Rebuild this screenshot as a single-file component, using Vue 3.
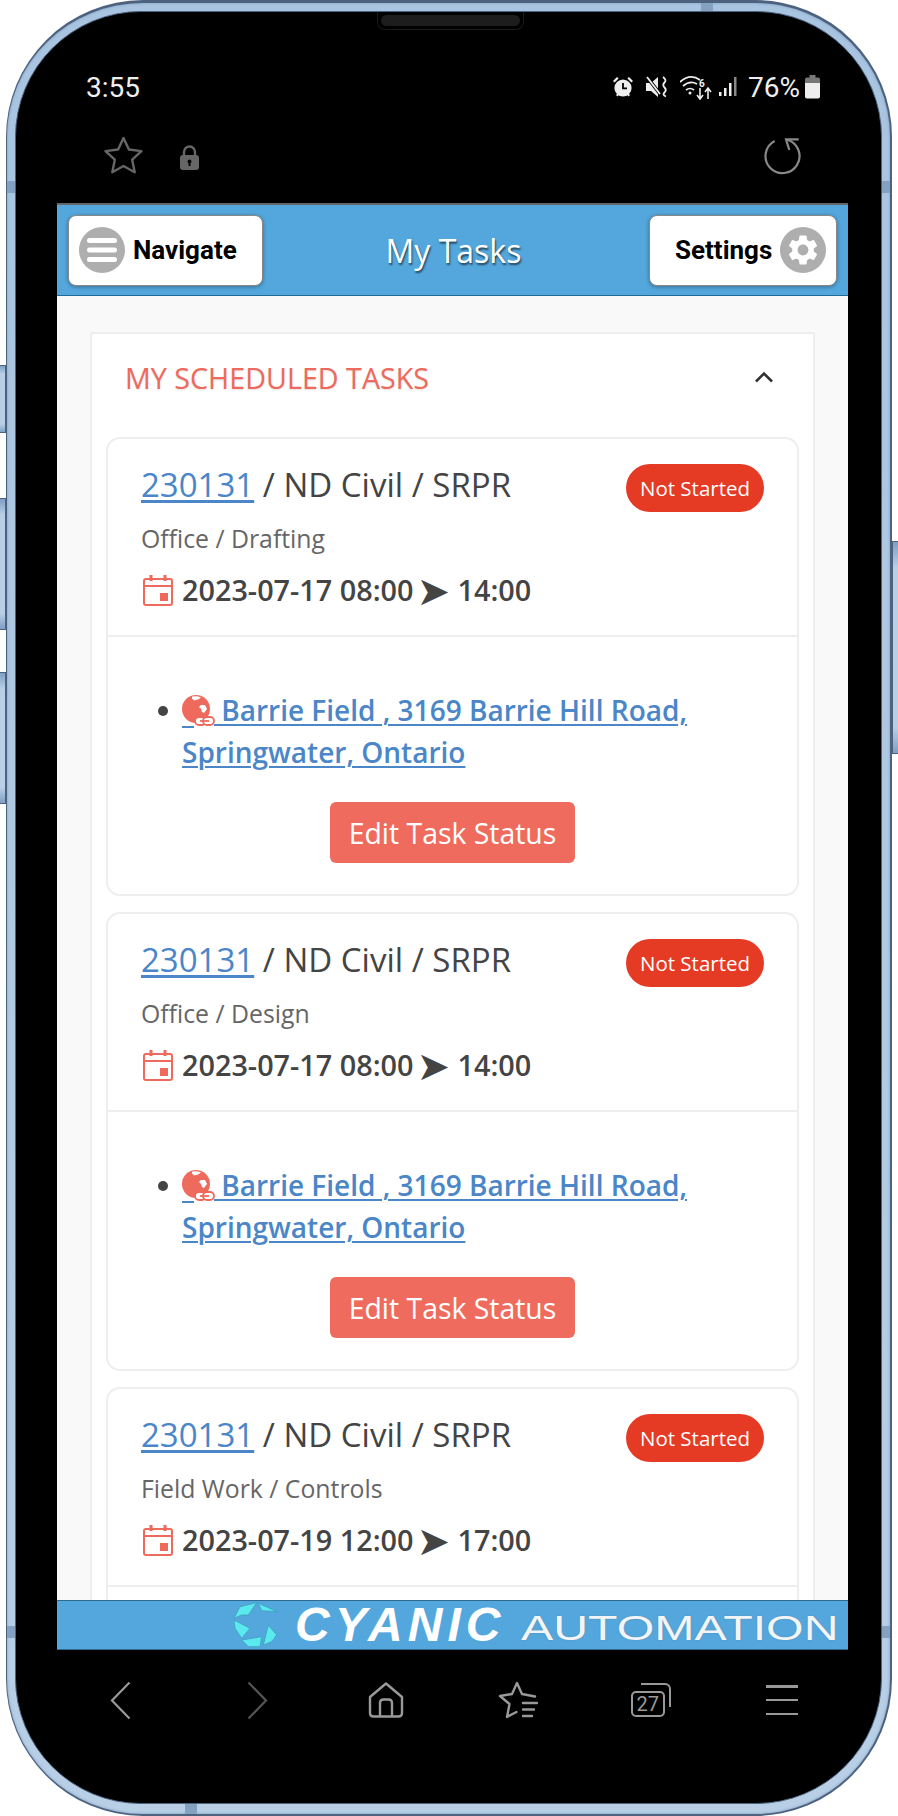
<script setup>
const tasks = [
  { sub: 'Office / Drafting', date: '2023-07-17 08:00', end: '14:00', open: true },
  { sub: 'Office / Design', date: '2023-07-17 08:00', end: '14:00', open: true },
  { sub: 'Field Work / Controls', date: '2023-07-19 12:00', end: '17:00', open: false }
]
const notches = ['n-top', 'n-bottom', 'n-l1', 'n-l2', 'n-r1', 'n-r2']
const blades = [
  '25.3,1.3 44.3,9.7 28.7,8.7',
  '1,16.3 7,4.7 23.7,.7 15.3,13 8.7,13',
  '1,18 17,26.3 8.7,36.3 2,26.3',
  '8.7,38 28.7,34.7 27,44.7 15.3,44.7',
  '30.3,43 35.3,23 43.7,33 38.7,39.7'
]
</script>

<template>
  <div class="page">
    <i class="side s1"></i><i class="side s2"></i><i class="side s3"></i><i class="side s4"></i>
    <div class="phone">
      <i v-for="n in notches" :key="n" class="notch" :class="n"></i>
      <div class="bezel">
        <div class="camera"><i class="camera-pill"></i></div>

        <div class="status">
          <span class="clock">3:55</span>
          <div class="status-right">
            <svg width="22" height="22" viewBox="0 0 22 22" fill="#eee">
              <circle cx="11" cy="12" r="8.6"/>
              <path d="M1 5l4-4 1.6 1.6-4 4zM21 5l-4-4-1.6 1.6 4 4zM4 19l2-2 1.4 1.4-2 2zM18 19l-2-2-1.4 1.4 2 2z"/>
              <path d="M11 7v5.4h4" fill="none" stroke="#000" stroke-width="1.8"/>
            </svg>
            <svg class="ic-mute" width="22" height="22" viewBox="0 0 22 22">
              <path d="M0 7h5l7-6v20l-7-6H0z" fill="#eee"/>
              <path d="M1 1l13 17" stroke="#000" stroke-width="3.5"/>
              <path d="M1 1l13 17" stroke="#eee" stroke-width="1.8"/>
              <path d="M17 1q4 3 1.5 5.5t0 5q2.5 2.5 0 5t1.5 4" fill="none" stroke="#eee" stroke-width="1.8"/>
            </svg>
            <svg class="ic-wifi" width="32" height="25" viewBox="0 0 32 25" fill="none" stroke="#eee" stroke-width="1.7">
              <path d="M0 7q10-9 20-2M3 11q7-6 14-2M6 15q4-3 8 0"/>
              <circle cx="10" cy="18" r="1.5" fill="#eee" stroke="none"/>
              <text x="19" y="12" fill="#eee" stroke="none" class="wifi-six">6</text>
              <path d="M20 13v11M17 20l3 4 3-4M28 24V13M25 17l3-4 3 4" stroke-width="1.6"/>
            </svg>
            <svg class="ic-signal" width="20" height="20" viewBox="0 0 20 20" fill="#eee">
              <rect x="0" y="15" width="2.5" height="4"/>
              <rect x="5" y="11" width="2.5" height="8"/>
              <rect x="10" y="6" width="2.5" height="13"/>
              <rect x="15" y="0" width="2.5" height="19" fill="#888"/>
            </svg>
            <span class="percent">76%</span>
            <svg width="15" height="24" viewBox="0 0 15 24">
              <path d="M4.5 0h6v2.5H13q2 0 2 2V8H0V4.5q0-2 2-2h2.5z" fill="#777"/>
              <path d="M0 8h15v13.5q0 2-2 2H2q-2 0-2-2z" fill="#eee"/>
            </svg>
          </div>
        </div>

        <div class="urlbar">
          <div class="url-left">
            <svg width="41" height="40" viewBox="0 0 41 40" fill="none" stroke="#666" stroke-width="2.4" stroke-linejoin="round">
              <path d="M20.5 2l5.4 11.5 12.6 1.6-9.3 8.6 2.5 12.5-11.2-6.2-11.2 6.2 2.5-12.5-9.3-8.6 12.6-1.6z"/>
            </svg>
            <svg class="ic-lock" width="19" height="25" viewBox="0 0 19 25">
              <path d="M4 11V7a5.5 5.5 0 0 1 11 0v4" fill="none" stroke="#666" stroke-width="2.4"/>
              <rect x="0" y="10" width="19" height="15" rx="3" fill="#666"/>
              <path d="M9.5 14.5a2 2 0 0 1 1 3.7V21h-2v-2.8a2 2 0 0 1 1-3.7z" fill="#000"/>
            </svg>
          </div>
          <svg width="38" height="38" viewBox="0 0 38 38" fill="none" stroke="#888" stroke-width="2.2">
            <path d="M11.7 4A17 17 0 1 0 24 2.7"/>
            <path d="M35.7 2.3H23L26.3 13"/>
          </svg>
        </div>

        <div class="screen">
          <header class="topbar">
            <button class="tb-btn nav-btn">
              <span class="circle">
                <svg width="30" height="24" viewBox="0 0 30 24" fill="#fff">
                  <rect x="0" y="0" width="30" height="5" rx="2.5"/>
                  <rect x="0" y="9.5" width="30" height="5" rx="2.5"/>
                  <rect x="0" y="19" width="30" height="5" rx="2.5"/>
                </svg>
              </span>
              <span>Navigate</span>
            </button>
            <h1 class="title">My Tasks</h1>
            <button class="tb-btn set-btn">
              <span>Settings</span>
              <span class="circle">
                <svg width="36" height="36" viewBox="0 0 24 24" fill="#fff">
                  <path fill-rule="evenodd" d="M19.14 12.94c.04-.3.06-.61.06-.94 0-.32-.02-.64-.07-.94l2.03-1.58c.18-.14.23-.41.12-.61l-1.92-3.32c-.12-.22-.37-.29-.59-.22l-2.39.96c-.5-.38-1.03-.7-1.62-.94l-.36-2.54c-.04-.24-.24-.41-.48-.41h-3.84c-.24 0-.43.17-.47.41l-.36 2.54c-.59.24-1.13.57-1.62.94l-2.39-.96c-.22-.08-.47 0-.59.22L2.74 8.87c-.12.21-.08.47.12.61l2.03 1.58c-.05.3-.09.63-.09.94s.02.64.07.94l-2.03 1.58c-.18.14-.23.41-.12.61l1.92 3.32c.12.22.37.29.59.22l2.39-.96c.5.38 1.03.7 1.62.94l.36 2.54c.05.24.24.41.48.41h3.84c.24 0 .44-.17.47-.41l.36-2.54c.59-.24 1.13-.56 1.62-.94l2.39.96c.22.08.47 0 .59-.22l1.92-3.32c.12-.22.07-.47-.12-.61l-2.01-1.58zM12 15.6c-1.98 0-3.6-1.62-3.6-3.6s1.62-3.6 3.6-3.6 3.6 1.62 3.6 3.6-1.62 3.6-3.6 3.6z"/>
                </svg>
              </span>
            </button>
          </header>

          <main class="main">
            <section class="panel">
              <div class="panel-head">
                <h2>MY SCHEDULED TASKS</h2>
                <svg width="20" height="12" viewBox="0 0 20 12" fill="none" stroke="#333" stroke-width="2.6">
                  <path d="M2 10.5l8-8 8 8"/>
                </svg>
              </div>

              <article v-for="(t, i) in tasks" :key="i" class="task">
                <div class="task-head">
                  <div class="task-top">
                    <div class="task-title"><a class="num">230131</a> / ND Civil / SRPR</div>
                    <span class="badge">Not Started</span>
                  </div>
                  <div class="task-sub">{{ t.sub }}</div>
                  <div class="task-date">
                    <svg width="30" height="31" viewBox="0 0 30 31" fill="none" stroke="#ee6a5c" stroke-width="2">
                      <rect x="1" y="4" width="28" height="26" rx="2"/>
                      <path d="M1 11h28"/>
                      <path d="M8 0v6M22 0v6" stroke-width="3"/>
                      <rect x="17" y="18" width="8" height="8" fill="#ee6a5c" stroke="none"/>
                    </svg>
                    <span>{{ t.date }}<span class="arrow">➤</span> {{ t.end }}</span>
                  </div>
                </div>
                <div class="task-body">
                  <template v-if="t.open">
                    <ul>
                      <li>
                        <a class="loc">
                          <span class="globe">
                            <svg width="36" height="34" viewBox="0 0 36 34">
                              <circle cx="14" cy="14" r="14" fill="#ee6a5c"/>
                              <path d="M10 1.5q5-1 9 1l-3 2-4 1-2-2zM19 10l4 0 2 4-3 4-2-1-1-3-2-2z" fill="#fff"/>
                              <rect x="13" y="22" width="11" height="8" rx="4" fill="#fff" stroke="#ee6a5c" stroke-width="1.8"/>
                              <rect x="21" y="22" width="11" height="8" rx="4" fill="#fff" stroke="#ee6a5c" stroke-width="1.8"/>
                              <path d="M18 26h9" stroke="#ee6a5c" stroke-width="1.8"/>
                            </svg>
                          </span> Barrie Field , 3169 Barrie Hill Road, Springwater, Ontario
                        </a>
                      </li>
                    </ul>
                    <button class="edit">Edit Task Status</button>
                  </template>
                </div>
              </article>
            </section>
          </main>

          <footer class="footer">
            <svg class="aperture" width="45" height="46" viewBox="0 0 45 46">
              <polygon v-for="b in blades" :key="b" :points="b" fill="#5ae9ee" stroke="#3f9fb8" stroke-width=".8" stroke-linejoin="round"/>
            </svg>
            <span class="cyanic">CYANIC</span>
            <span class="automation">AUTOMATION</span>
          </footer>
        </div>

        <nav class="navbar">
          <svg class="nb-back" width="21" height="39" viewBox="0 0 21 39" fill="none" stroke="#999" stroke-width="2.2"><path d="M19.5 1.5L2 19.5l17.5 18"/></svg>
          <svg class="nb-fwd" width="21" height="39" viewBox="0 0 21 39" fill="none" stroke="#555" stroke-width="2.2"><path d="M1.5 1.5L19 19.5l-17.5 18"/></svg>
          <svg width="36" height="36" viewBox="0 0 36 36" fill="none" stroke="#999" stroke-width="2.4" stroke-linejoin="round">
            <path d="M2 15L18 1.5 34 15v16q0 3.5-3.5 3.5h-25Q2 34.5 2 31z"/>
            <path d="M12 34.5V21q0-3.5 3.5-3.5h5Q24 17.5 24 21v13.5"/>
          </svg>
          <svg width="40" height="38" viewBox="0 0 40 38" fill="none" stroke="#999" stroke-width="2.4" stroke-linejoin="round" stroke-linecap="round">
            <path d="M18.5 31L9 36l2.5-13L2 15l12-2L19 2l5 11 13 2.5M25 22h14M25 28.5h11M25 35h9"/>
          </svg>
          <div class="tabs">
            <i class="tabs-back"></i>
            <span class="tabs-front">27</span>
          </div>
          <div class="menu"><i></i><i></i><i></i></div>
        </nav>
      </div>
    </div>
  </div>
</template>

<style>
html, body { margin: 0; background: #fff; }
</style>

<style scoped>
.page {
  position: relative;
  width: 898px;
  height: 1816px;
  padding: 0 6px;
  box-sizing: border-box;
  overflow: hidden;
  background: #fff;
}
.side {
  position: absolute;
  width: 6px;
  background: linear-gradient(to bottom, #7ea0c4, #b8cfe6 12%, #b8cfe6 88%, #7ea0c4);
  border: 1px solid #4c627f;
  box-sizing: border-box;
}
.s1 { left: 0; top: 365px; height: 68px; border-left: 0; }
.s2 { left: 0; top: 498px; height: 132px; border-left: 0; }
.s3 { left: 0; top: 672px; height: 132px; border-left: 0; }
.s4 { right: 0; top: 541px; height: 213px; border-right: 0; }

.phone {
  position: relative;
  height: 1816px;
  box-sizing: border-box;
  padding: 9px 9px 11px;
  border-radius: 137px;
  background: linear-gradient(to bottom, #a9c4e0, #b8cfe6);
  border: 2px solid #4c627f;
  border-top-width: 3px;
  border-left-width: 1px;
  box-shadow: inset 0 0 3px #7d9dc2;
}
.notch { position: absolute; background: #84a1c2; }
.n-top { left: 694px; top: 0; width: 12px; height: 9px; }
.n-bottom { left: 178px; bottom: 0; width: 12px; height: 11px; }
.n-l1 { left: 0; top: 178px; width: 9px; height: 12px; }
.n-l2 { left: 0; top: 1623px; width: 9px; height: 12px; }
.n-r1 { right: 0; top: 178px; width: 9px; height: 12px; }
.n-r2 { right: 0; top: 1623px; width: 9px; height: 12px; }

.bezel {
  position: relative;
  box-sizing: border-box;
  background: #000;
  border-radius: 126px;
  padding: 0 33px 0 41px;
  display: flex;
  flex-direction: column;
  border: 1px solid #4c627f;
  margin: -1px;
  height: calc(100% + 2px);
}
.camera {
  position: absolute;
  left: 361px;
  top: 0;
  width: 147px;
  height: 18px;
  box-sizing: border-box;
  border: 1px solid #1a1a1a;
  border-top: 0;
  border-radius: 0 0 8px 8px;
  padding: 3px;
}
.camera-pill { display: block; height: 11px; border-radius: 6px; background: #1d1d1d; }

.status {
  margin-top: 55px;
  height: 40px;
  padding: 0 28px 0 29px;
  display: flex;
  align-items: center;
  justify-content: space-between;
  color: #eee;
  font-family: Roboto, sans-serif;
  font-size: 28px;
}
.status-right { display: flex; align-items: center; }
.ic-mute { margin-left: 12px; }
.ic-wifi { margin-left: 12px; margin-top: 1px; }
.ic-signal { margin-left: 7px; }
.percent { margin-left: 9px; margin-right: 5px; }
.wifi-six { font: 700 10px Roboto, sans-serif; }

.urlbar {
  margin-top: 29px;
  height: 40px;
  padding: 0 47px 0 46px;
  display: flex;
  align-items: center;
  justify-content: space-between;
}
.url-left { display: flex; align-items: center; gap: 36px; }
.ic-lock { margin-top: 2px; }

.screen {
  margin-top: 27px;
  height: 1447px;
  display: flex;
  flex-direction: column;
  background: #f9f9f9;
  overflow: hidden;
}
.topbar {
  flex: none;
  height: 93px;
  box-sizing: border-box;
  padding: 0 11px;
  background: #54a7dd;
  border-top: 2px solid #666;
  border-bottom: 1px solid #1f6a96;
  display: flex;
  align-items: center;
  justify-content: space-between;
}
.tb-btn {
  height: 71px;
  box-sizing: border-box;
  background: #fff;
  border: 1px solid #888;
  border-radius: 8px;
  box-shadow: 0 1px 4px rgba(0, 0, 0, 0.35);
  font: 700 26px Roboto, sans-serif;
  color: #000;
  display: flex;
  align-items: center;
  padding: 0;
}
.nav-btn { width: 195px; padding-left: 10px; gap: 8px; }
.set-btn { width: 188px; padding-left: 25px; gap: 8px; }
.circle {
  width: 46px;
  height: 46px;
  flex: none;
  border-radius: 50%;
  background: #aeaeae;
  display: flex;
  align-items: center;
  justify-content: center;
}
.title {
  margin: 0 5px 0 0;
  font: 500 32px "Open Sans", sans-serif;
  color: #fff;
  text-shadow: 1px 2px 2px rgba(0, 0, 0, 0.6);
}

.main { flex: 1; min-height: 0; overflow: hidden; padding: 36px 33px 0; }
.panel { background: #fff; border: 2px solid #eee; padding: 0 14px; }
.panel-head {
  height: 103px;
  box-sizing: border-box;
  padding: 0 25px 17px 19px;
  display: flex;
  align-items: center;
  justify-content: space-between;
}
.panel-head h2 {
  margin: 0;
  font: 400 28.7px "Open Sans", sans-serif;
  color: #ee6a5c;
  text-shadow: 0 1px 2px rgba(0, 0, 0, 0.12);
}

.task {
  border: 2px solid #eee;
  border-radius: 14px;
  margin-bottom: 16px;
  font-family: "Open Sans", sans-serif;
  color: #444;
}
.task-head { height: 198px; box-sizing: border-box; padding: 22px 33px 0; border-bottom: 2px solid #eee; }
.task-top { display: flex; align-items: flex-start; justify-content: space-between; height: 48px; }
.task-title { font-size: 33px; line-height: 48px; }
.num { color: #4a86c8; text-decoration: underline; text-underline-offset: 3px; text-decoration-thickness: 3px; }
.badge {
  margin: 3px 0 0 0;
  width: 138px;
  height: 48px;
  border-radius: 24px;
  background: #e53a23;
  color: #fff;
  font-size: 20.5px;
  line-height: 48px;
  text-align: center;
}
.task-sub { margin-top: 11px; font-size: 24.8px; line-height: 36px; color: #666; }
.task-date {
  margin-top: 14px;
  display: flex;
  align-items: center;
  gap: 9px;
  font-size: 28.8px;
  font-weight: 600;
  line-height: 40px;
  padding-left: 2px;
}
.arrow {
  margin-left: 3px;
  font-family: "DejaVu Sans", sans-serif;
  font-weight: 400;
  font-size: 40px;
  line-height: 0;
  vertical-align: -4px;
}

.task-body { height: 257px; box-sizing: border-box; padding-top: 53px; text-align: center; }
.task-body ul { margin: 0; padding: 0 60px 0 74px; text-align: left; list-style: none; }
.task-body li { position: relative; }
.task-body li::before {
  content: "";
  position: absolute;
  left: -24px;
  top: 16px;
  width: 10px;
  height: 10px;
  border-radius: 50%;
  background: #444;
}
.loc {
  color: #4a86c8;
  font-size: 28px;
  font-weight: 600;
  line-height: 41.5px;
  text-decoration: underline;
  text-decoration-thickness: 2px;
  text-underline-offset: 3px;
}
.globe { position: relative; display: inline-block; width: 32px; height: 28px; vertical-align: -2px; }
.globe svg { position: absolute; left: 0; top: 0; }
.globe::after {
  content: "";
  position: absolute;
  left: 0;
  top: 31px;
  width: 12px;
  height: 2px;
  background: #4a86c8;
}
.edit {
  display: block;
  margin: 29px auto 0;
  width: 245px;
  height: 61px;
  border: 0;
  border-radius: 6px;
  background: #ef6b5e;
  color: #fff;
  font: 400 28.4px "Open Sans", sans-serif;
}

.footer {
  flex: none;
  height: 50px;
  box-sizing: border-box;
  padding-left: 176px;
  background: #54a7dd;
  border-top: 1px solid #2f6a8f;
  border-bottom: 1px solid #2f6a8f;
  display: flex;
  align-items: center;
  color: #fff;
  white-space: nowrap;
}
.aperture { flex: none; }
.cyanic {
  margin-left: 17px;
  font: italic 700 48px/40px "Liberation Sans", sans-serif;
  letter-spacing: 5px;
}
.automation {
  margin-left: 16px;
  margin-top: 6px;
  font: 400 35px/40px "Liberation Sans", sans-serif;
  color: #f2f5f7;
  text-shadow: 0 0 1px rgba(90, 90, 90, 0.6);
  transform: scaleX(1.38);
  transform-origin: left center;
}

.navbar {
  margin-top: 30px;
  margin-left: -2px;
  height: 40px;
  display: grid;
  grid-template-columns: repeat(6, 132.4px);
  justify-items: center;
  align-items: center;
}
.nb-back { margin-right: 2px; }
.nb-fwd { margin-left: 7px; }
.tabs { position: relative; width: 40px; height: 34px; }
.tabs-back {
  position: absolute;
  right: 0;
  top: 0;
  width: 30px;
  height: 24px;
  box-sizing: border-box;
  border: solid #999;
  border-width: 2.5px 2.5px 0 0;
  border-radius: 0 6px 0 0;
}
.tabs-front {
  position: absolute;
  left: 0;
  bottom: 0;
  width: 34px;
  height: 26px;
  box-sizing: border-box;
  border: 2.5px solid #999;
  border-radius: 5px;
  background: #000;
  color: #999;
  font: 400 20px/22px Roboto, sans-serif;
  text-align: center;
}
.menu { width: 32px; height: 30px; margin-right: 2px; display: flex; flex-direction: column; justify-content: space-between; }
.menu i { display: block; height: 2.5px; background: #999; }
</style>
